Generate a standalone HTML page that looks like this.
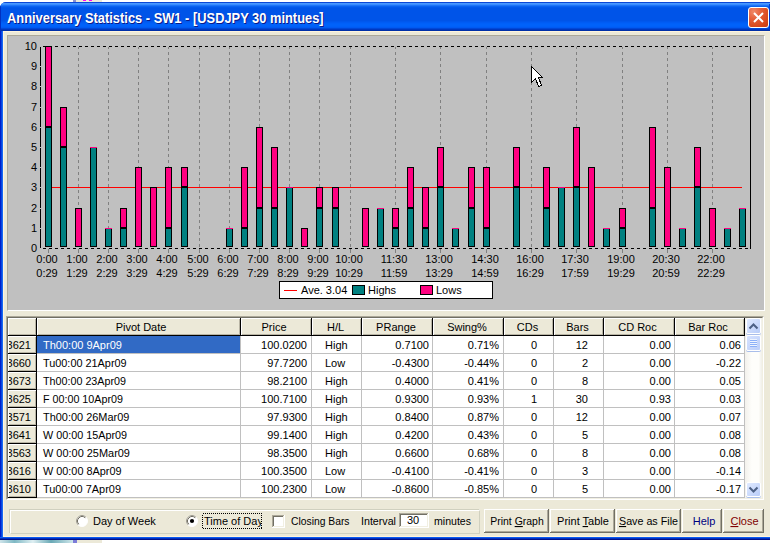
<!DOCTYPE html>
<html><head><meta charset="utf-8"><style>
*{margin:0;padding:0;box-sizing:border-box}
html,body{width:770px;height:543px;overflow:hidden;background:#fff;position:relative}
.a{position:absolute}
svg text{font-family:"Liberation Sans", sans-serif;font-size:11px;fill:#000}
</style></head><body>
<!-- desktop bits -->
<div class="a" style="left:73px;top:0;width:3px;height:2px;background:#8A8FD0"></div>
<div class="a" style="left:76px;top:0;width:26px;height:2px;background:#ECE9D8"></div>
<div class="a" style="left:83px;top:0;width:3px;height:1px;background:#F0F"></div>
<div class="a" style="left:89px;top:0;width:3px;height:1px;background:#F0F"></div>
<div class="a" style="left:0;top:540px;width:73px;height:3px;background:linear-gradient(90deg,#cfe4ea,#7fb8c4 20%,#dfeff2 45%,#6aa9b6 70%,#cfe6ea)"></div>
<div class="a" style="left:73px;top:540px;width:4px;height:3px;background:#7C7CD8"></div>
<div class="a" style="left:77px;top:540px;width:25px;height:3px;background:#ECE9D8"></div>
<!-- window frame -->
<div class="a" style="left:0;top:2px;width:776px;height:538px;border-radius:6px 7px 0 0;background:#0A4FE0"></div>
<div class="a" style="left:0;top:2px;width:776px;height:538px;border-radius:6px 7px 0 0;overflow:hidden">
 <div class="a" style="left:0;top:0;width:790px;height:29px;background:linear-gradient(180deg,#0A48D8 0px,#0A48D8 1px,#4898FF 1px,#4898FF 2px,#3A8CFF 2px,#3A8CFF 3px,#1C74F8 3px,#1C74F8 4px,#0A62F0 4px,#0A62F0 5px,#0258EC 5px,#0258EC 6px,#0054E8 6px,#0054E8 7px,#0054E8 7px,#0054E8 8px,#0054E8 8px,#0054E8 9px,#0054E8 9px,#0054E8 10px,#0054E8 10px,#0054E8 11px,#0054E8 11px,#0054E8 12px,#0054E8 12px,#0054E8 13px,#0054E8 13px,#0054E8 14px,#0054E8 14px,#0054E8 15px,#0054E8 15px,#0054E8 16px,#0054E8 16px,#0054E8 17px,#0054E8 17px,#0054E8 18px,#0054E8 18px,#0054E8 19px,#0058EE 19px,#0058EE 20px,#005CF4 20px,#005CF4 21px,#0060F8 21px,#0060F8 22px,#0062FA 22px,#0062FA 23px,#0062FA 23px,#0062FA 24px,#0060F8 24px,#0060F8 25px,#005AF2 25px,#005AF2 26px,#0048D8 26px,#0048D8 27px,#0038C0 27px,#0038C0 28px,#0030A8 28px,#0030A8 29px)"></div>
 <div class="a" style="left:0;top:4px;width:1px;height:26px;background:#0030C0"></div>
 <div class="a" style="left:0;top:29px;width:3px;height:509px;background:linear-gradient(90deg,#0020C8 0,#0020C8 1px,#0846E2 1px,#0846E2 2px,#1A6AF0 2px)"></div>
 <div class="a" style="left:0;top:535px;width:790px;height:3px;background:linear-gradient(180deg,#0A5AF0 0,#0A5AF0 1px,#0030C0 1px,#0030C0 2px,#00108A 2px)"></div>
</div>
<div class="a" style="left:3px;top:31px;width:787px;height:506px;background:#FFF4DC"></div>
<div class="a" style="left:4px;top:32px;width:786px;height:504px;background:#ECE9D8"></div>
<!-- title -->
<div class="a" style="left:7px;top:9.5px;font:bold 13px 'Liberation Sans',sans-serif;color:#fff;text-shadow:1px 1px #0A1A8A;white-space:nowrap;line-height:18px;transform:scale(0.99,1.12);transform-origin:0 14px">Anniversary Statistics - SW1 - [USDJPY 30 mintues]</div>
<!-- close button -->
<div class="a" style="left:769px;top:4px;width:1px;height:26px;background:linear-gradient(180deg,#0040D8,#0034C0)"></div>
<div class="a" style="left:748px;top:7px;width:21px;height:21px;border:1px solid #fff;border-radius:3px;background:radial-gradient(circle at 25% 20%,#F08A6A 0,#E5603A 35%,#DA4A1E 70%,#C43A10 100%)"></div>
<svg class="a" style="left:748px;top:7px" width="21" height="21"><path d="M6 6 L15 15 M15 6 L6 15" stroke="#fff" stroke-width="2"/></svg>
<!-- chart panel -->
<div class="a" style="left:7px;top:35px;width:758px;height:276px;background:#C0C0C0;border-top:1px solid #ACA899;border-left:1px solid #ACA899;border-right:1px solid #fff;border-bottom:1px solid #fff"></div>
<svg class="a" style="left:0;top:0" width="770" height="543" shape-rendering="crispEdges"><line x1="48.5" y1="47" x2="48.5" y2="248" stroke="#808080" stroke-width="1" stroke-dasharray="3 3" stroke-dashoffset="-5"/><rect x="48" y="249" width="1" height="4" fill="#808080"/><line x1="78.5" y1="47" x2="78.5" y2="248" stroke="#808080" stroke-width="1" stroke-dasharray="3 3" stroke-dashoffset="-5"/><rect x="78" y="249" width="1" height="4" fill="#808080"/><line x1="108.5" y1="47" x2="108.5" y2="248" stroke="#808080" stroke-width="1" stroke-dasharray="3 3" stroke-dashoffset="-5"/><rect x="108" y="249" width="1" height="4" fill="#808080"/><line x1="138.5" y1="47" x2="138.5" y2="248" stroke="#808080" stroke-width="1" stroke-dasharray="3 3" stroke-dashoffset="-5"/><rect x="138" y="249" width="1" height="4" fill="#808080"/><line x1="168.5" y1="47" x2="168.5" y2="248" stroke="#808080" stroke-width="1" stroke-dasharray="3 3" stroke-dashoffset="-5"/><rect x="168" y="249" width="1" height="4" fill="#808080"/><line x1="199.5" y1="47" x2="199.5" y2="248" stroke="#808080" stroke-width="1" stroke-dasharray="3 3" stroke-dashoffset="-5"/><rect x="199" y="249" width="1" height="4" fill="#808080"/><line x1="229.5" y1="47" x2="229.5" y2="248" stroke="#808080" stroke-width="1" stroke-dasharray="3 3" stroke-dashoffset="-5"/><rect x="229" y="249" width="1" height="4" fill="#808080"/><line x1="259.5" y1="47" x2="259.5" y2="248" stroke="#808080" stroke-width="1" stroke-dasharray="3 3" stroke-dashoffset="-5"/><rect x="259" y="249" width="1" height="4" fill="#808080"/><line x1="289.5" y1="47" x2="289.5" y2="248" stroke="#808080" stroke-width="1" stroke-dasharray="3 3" stroke-dashoffset="-5"/><rect x="289" y="249" width="1" height="4" fill="#808080"/><line x1="319.5" y1="47" x2="319.5" y2="248" stroke="#808080" stroke-width="1" stroke-dasharray="3 3" stroke-dashoffset="-5"/><rect x="319" y="249" width="1" height="4" fill="#808080"/><line x1="350.5" y1="47" x2="350.5" y2="248" stroke="#808080" stroke-width="1" stroke-dasharray="3 3" stroke-dashoffset="-5"/><rect x="350" y="249" width="1" height="4" fill="#808080"/><line x1="395.5" y1="47" x2="395.5" y2="248" stroke="#808080" stroke-width="1" stroke-dasharray="3 3" stroke-dashoffset="-5"/><rect x="395" y="249" width="1" height="4" fill="#808080"/><line x1="440.5" y1="47" x2="440.5" y2="248" stroke="#808080" stroke-width="1" stroke-dasharray="3 3" stroke-dashoffset="-5"/><rect x="440" y="249" width="1" height="4" fill="#808080"/><line x1="486.5" y1="47" x2="486.5" y2="248" stroke="#808080" stroke-width="1" stroke-dasharray="3 3" stroke-dashoffset="-5"/><rect x="486" y="249" width="1" height="4" fill="#808080"/><line x1="531.5" y1="47" x2="531.5" y2="248" stroke="#808080" stroke-width="1" stroke-dasharray="3 3" stroke-dashoffset="-5"/><rect x="531" y="249" width="1" height="4" fill="#808080"/><line x1="576.5" y1="47" x2="576.5" y2="248" stroke="#808080" stroke-width="1" stroke-dasharray="3 3" stroke-dashoffset="-5"/><rect x="576" y="249" width="1" height="4" fill="#808080"/><line x1="622.5" y1="47" x2="622.5" y2="248" stroke="#808080" stroke-width="1" stroke-dasharray="3 3" stroke-dashoffset="-5"/><rect x="622" y="249" width="1" height="4" fill="#808080"/><line x1="667.5" y1="47" x2="667.5" y2="248" stroke="#808080" stroke-width="1" stroke-dasharray="3 3" stroke-dashoffset="-5"/><rect x="667" y="249" width="1" height="4" fill="#808080"/><line x1="712.5" y1="47" x2="712.5" y2="248" stroke="#808080" stroke-width="1" stroke-dasharray="3 3" stroke-dashoffset="-5"/><rect x="712" y="249" width="1" height="4" fill="#808080"/><line x1="43" y1="46.5" x2="750" y2="46.5" stroke="#000" stroke-width="1" stroke-dasharray="3 3"/><line x1="43" y1="248.5" x2="750" y2="248.5" stroke="#000" stroke-width="1" stroke-dasharray="3 3"/><rect x="40" y="47" width="1" height="19" fill="#000"/><rect x="40" y="67" width="1" height="19" fill="#000"/><rect x="40" y="87" width="1" height="20" fill="#000"/><rect x="40" y="108" width="1" height="19" fill="#000"/><rect x="40" y="128" width="1" height="19" fill="#000"/><rect x="40" y="148" width="1" height="19" fill="#000"/><rect x="40" y="168" width="1" height="19" fill="#000"/><rect x="40" y="188" width="1" height="20" fill="#000"/><rect x="40" y="209" width="1" height="19" fill="#000"/><rect x="40" y="229" width="1" height="19" fill="#000"/><rect x="750" y="46" width="1" height="203" fill="#000"/><rect x="48" y="187" width="694" height="1" fill="#FF0000"/><rect x="45" y="46" width="7" height="81" fill="#000"/><rect x="46" y="47" width="5" height="79" fill="#FF0080"/><rect x="45" y="127" width="7" height="120" fill="#000"/><rect x="46" y="128" width="5" height="118" fill="#008080"/><rect x="60" y="107" width="7" height="40" fill="#000"/><rect x="61" y="108" width="5" height="38" fill="#FF0080"/><rect x="60" y="147" width="7" height="100" fill="#000"/><rect x="61" y="148" width="5" height="98" fill="#008080"/><rect x="75" y="208" width="7" height="39" fill="#000"/><rect x="76" y="209" width="5" height="37" fill="#FF0080"/><rect x="90" y="147" width="7" height="100" fill="#000"/><rect x="91" y="148" width="5" height="98" fill="#008080"/><rect x="90" y="147" width="7" height="1" fill="#FF0080"/><rect x="105" y="228" width="7" height="19" fill="#000"/><rect x="106" y="229" width="5" height="17" fill="#008080"/><rect x="105" y="228" width="7" height="1" fill="#FF0080"/><rect x="120" y="208" width="7" height="20" fill="#000"/><rect x="121" y="209" width="5" height="18" fill="#FF0080"/><rect x="120" y="228" width="7" height="19" fill="#000"/><rect x="121" y="229" width="5" height="17" fill="#008080"/><rect x="135" y="167" width="7" height="80" fill="#000"/><rect x="136" y="168" width="5" height="78" fill="#FF0080"/><rect x="150" y="187" width="7" height="60" fill="#000"/><rect x="151" y="188" width="5" height="58" fill="#FF0080"/><rect x="165" y="167" width="7" height="61" fill="#000"/><rect x="166" y="168" width="5" height="59" fill="#FF0080"/><rect x="165" y="228" width="7" height="19" fill="#000"/><rect x="166" y="229" width="5" height="17" fill="#008080"/><rect x="181" y="167" width="7" height="20" fill="#000"/><rect x="182" y="168" width="5" height="18" fill="#FF0080"/><rect x="181" y="187" width="7" height="60" fill="#000"/><rect x="182" y="188" width="5" height="58" fill="#008080"/><rect x="226" y="228" width="7" height="19" fill="#000"/><rect x="227" y="229" width="5" height="17" fill="#008080"/><rect x="226" y="228" width="7" height="1" fill="#FF0080"/><rect x="241" y="167" width="7" height="61" fill="#000"/><rect x="242" y="168" width="5" height="59" fill="#FF0080"/><rect x="241" y="228" width="7" height="19" fill="#000"/><rect x="242" y="229" width="5" height="17" fill="#008080"/><rect x="256" y="127" width="7" height="81" fill="#000"/><rect x="257" y="128" width="5" height="79" fill="#FF0080"/><rect x="256" y="208" width="7" height="39" fill="#000"/><rect x="257" y="209" width="5" height="37" fill="#008080"/><rect x="271" y="147" width="7" height="61" fill="#000"/><rect x="272" y="148" width="5" height="59" fill="#FF0080"/><rect x="271" y="208" width="7" height="39" fill="#000"/><rect x="272" y="209" width="5" height="37" fill="#008080"/><rect x="286" y="187" width="7" height="60" fill="#000"/><rect x="287" y="188" width="5" height="58" fill="#008080"/><rect x="286" y="187" width="7" height="1" fill="#FF0080"/><rect x="301" y="228" width="7" height="19" fill="#000"/><rect x="302" y="229" width="5" height="17" fill="#FF0080"/><rect x="316" y="187" width="7" height="21" fill="#000"/><rect x="317" y="188" width="5" height="19" fill="#FF0080"/><rect x="316" y="208" width="7" height="39" fill="#000"/><rect x="317" y="209" width="5" height="37" fill="#008080"/><rect x="332" y="187" width="7" height="21" fill="#000"/><rect x="333" y="188" width="5" height="19" fill="#FF0080"/><rect x="332" y="208" width="7" height="39" fill="#000"/><rect x="333" y="209" width="5" height="37" fill="#008080"/><rect x="362" y="208" width="7" height="39" fill="#000"/><rect x="363" y="209" width="5" height="37" fill="#FF0080"/><rect x="377" y="208" width="7" height="39" fill="#000"/><rect x="378" y="209" width="5" height="37" fill="#008080"/><rect x="377" y="208" width="7" height="1" fill="#FF0080"/><rect x="392" y="208" width="7" height="20" fill="#000"/><rect x="393" y="209" width="5" height="18" fill="#FF0080"/><rect x="392" y="228" width="7" height="19" fill="#000"/><rect x="393" y="229" width="5" height="17" fill="#008080"/><rect x="407" y="167" width="7" height="41" fill="#000"/><rect x="408" y="168" width="5" height="39" fill="#FF0080"/><rect x="407" y="208" width="7" height="39" fill="#000"/><rect x="408" y="209" width="5" height="37" fill="#008080"/><rect x="422" y="187" width="7" height="41" fill="#000"/><rect x="423" y="188" width="5" height="39" fill="#FF0080"/><rect x="422" y="228" width="7" height="19" fill="#000"/><rect x="423" y="229" width="5" height="17" fill="#008080"/><rect x="437" y="147" width="7" height="40" fill="#000"/><rect x="438" y="148" width="5" height="38" fill="#FF0080"/><rect x="437" y="187" width="7" height="60" fill="#000"/><rect x="438" y="188" width="5" height="58" fill="#008080"/><rect x="452" y="228" width="7" height="19" fill="#000"/><rect x="453" y="229" width="5" height="17" fill="#008080"/><rect x="452" y="228" width="7" height="1" fill="#FF0080"/><rect x="468" y="167" width="7" height="41" fill="#000"/><rect x="469" y="168" width="5" height="39" fill="#FF0080"/><rect x="468" y="208" width="7" height="39" fill="#000"/><rect x="469" y="209" width="5" height="37" fill="#008080"/><rect x="483" y="167" width="7" height="61" fill="#000"/><rect x="484" y="168" width="5" height="59" fill="#FF0080"/><rect x="483" y="228" width="7" height="19" fill="#000"/><rect x="484" y="229" width="5" height="17" fill="#008080"/><rect x="513" y="147" width="7" height="40" fill="#000"/><rect x="514" y="148" width="5" height="38" fill="#FF0080"/><rect x="513" y="187" width="7" height="60" fill="#000"/><rect x="514" y="188" width="5" height="58" fill="#008080"/><rect x="543" y="167" width="7" height="41" fill="#000"/><rect x="544" y="168" width="5" height="39" fill="#FF0080"/><rect x="543" y="208" width="7" height="39" fill="#000"/><rect x="544" y="209" width="5" height="37" fill="#008080"/><rect x="558" y="187" width="7" height="60" fill="#000"/><rect x="559" y="188" width="5" height="58" fill="#008080"/><rect x="558" y="187" width="7" height="1" fill="#FF0080"/><rect x="573" y="127" width="7" height="60" fill="#000"/><rect x="574" y="128" width="5" height="58" fill="#FF0080"/><rect x="573" y="187" width="7" height="60" fill="#000"/><rect x="574" y="188" width="5" height="58" fill="#008080"/><rect x="588" y="167" width="7" height="80" fill="#000"/><rect x="589" y="168" width="5" height="78" fill="#FF0080"/><rect x="603" y="228" width="7" height="19" fill="#000"/><rect x="604" y="229" width="5" height="17" fill="#008080"/><rect x="603" y="228" width="7" height="1" fill="#FF0080"/><rect x="619" y="208" width="7" height="20" fill="#000"/><rect x="620" y="209" width="5" height="18" fill="#FF0080"/><rect x="619" y="228" width="7" height="19" fill="#000"/><rect x="620" y="229" width="5" height="17" fill="#008080"/><rect x="649" y="127" width="7" height="81" fill="#000"/><rect x="650" y="128" width="5" height="79" fill="#FF0080"/><rect x="649" y="208" width="7" height="39" fill="#000"/><rect x="650" y="209" width="5" height="37" fill="#008080"/><rect x="664" y="167" width="7" height="80" fill="#000"/><rect x="665" y="168" width="5" height="78" fill="#FF0080"/><rect x="679" y="228" width="7" height="19" fill="#000"/><rect x="680" y="229" width="5" height="17" fill="#008080"/><rect x="679" y="228" width="7" height="1" fill="#FF0080"/><rect x="694" y="147" width="7" height="40" fill="#000"/><rect x="695" y="148" width="5" height="38" fill="#FF0080"/><rect x="694" y="187" width="7" height="60" fill="#000"/><rect x="695" y="188" width="5" height="58" fill="#008080"/><rect x="709" y="208" width="7" height="39" fill="#000"/><rect x="710" y="209" width="5" height="37" fill="#FF0080"/><rect x="724" y="228" width="7" height="19" fill="#000"/><rect x="725" y="229" width="5" height="17" fill="#008080"/><rect x="724" y="228" width="7" height="1" fill="#FF0080"/><rect x="739" y="208" width="7" height="39" fill="#000"/><rect x="740" y="209" width="5" height="37" fill="#008080"/><rect x="739" y="208" width="7" height="1" fill="#FF0080"/><text x="37" y="252" text-anchor="end">0</text><text x="37" y="232" text-anchor="end">1</text><text x="37" y="212" text-anchor="end">2</text><text x="37" y="191" text-anchor="end">3</text><text x="37" y="171" text-anchor="end">4</text><text x="37" y="151" text-anchor="end">5</text><text x="37" y="131" text-anchor="end">6</text><text x="37" y="111" text-anchor="end">7</text><text x="37" y="90" text-anchor="end">8</text><text x="37" y="70" text-anchor="end">9</text><text x="37" y="50" text-anchor="end">10</text><text x="47.0" y="263" text-anchor="middle">0:00</text><text x="47.0" y="277" text-anchor="middle">0:29</text><text x="77.0" y="263" text-anchor="middle">1:00</text><text x="77.0" y="277" text-anchor="middle">1:29</text><text x="107.0" y="263" text-anchor="middle">2:00</text><text x="107.0" y="277" text-anchor="middle">2:29</text><text x="137.0" y="263" text-anchor="middle">3:00</text><text x="137.0" y="277" text-anchor="middle">3:29</text><text x="167.0" y="263" text-anchor="middle">4:00</text><text x="167.0" y="277" text-anchor="middle">4:29</text><text x="198.0" y="263" text-anchor="middle">5:00</text><text x="198.0" y="277" text-anchor="middle">5:29</text><text x="228.0" y="263" text-anchor="middle">6:00</text><text x="228.0" y="277" text-anchor="middle">6:29</text><text x="258.0" y="263" text-anchor="middle">7:00</text><text x="258.0" y="277" text-anchor="middle">7:29</text><text x="288.0" y="263" text-anchor="middle">8:00</text><text x="288.0" y="277" text-anchor="middle">8:29</text><text x="318.0" y="263" text-anchor="middle">9:00</text><text x="318.0" y="277" text-anchor="middle">9:29</text><text x="349.0" y="263" text-anchor="middle">10:00</text><text x="349.0" y="277" text-anchor="middle">10:29</text><text x="394.0" y="263" text-anchor="middle">11:30</text><text x="394.0" y="277" text-anchor="middle">11:59</text><text x="439.0" y="263" text-anchor="middle">13:00</text><text x="439.0" y="277" text-anchor="middle">13:29</text><text x="485.0" y="263" text-anchor="middle">14:30</text><text x="485.0" y="277" text-anchor="middle">14:59</text><text x="530.0" y="263" text-anchor="middle">16:00</text><text x="530.0" y="277" text-anchor="middle">16:29</text><text x="575.0" y="263" text-anchor="middle">17:30</text><text x="575.0" y="277" text-anchor="middle">17:59</text><text x="621.0" y="263" text-anchor="middle">19:00</text><text x="621.0" y="277" text-anchor="middle">19:29</text><text x="666.0" y="263" text-anchor="middle">20:30</text><text x="666.0" y="277" text-anchor="middle">20:59</text><text x="711.0" y="263" text-anchor="middle">22:00</text><text x="711.0" y="277" text-anchor="middle">22:29</text><rect x="279" y="281" width="214" height="18" fill="#000"/><rect x="280" y="282" width="212" height="16" fill="#fff"/><rect x="284" y="290" width="13" height="1" fill="#FF0000"/><text x="301" y="294">Ave. 3.04</text><rect x="352" y="285" width="13" height="10" fill="#000"/><rect x="353" y="286" width="11" height="8" fill="#008080"/><text x="368" y="294">Highs</text><rect x="420" y="285" width="13" height="10" fill="#000"/><rect x="421" y="286" width="11" height="8" fill="#FF0080"/><text x="436" y="294">Lows</text><path d="M531.5 66.5 L531.5 82.5 L535.5 78.5 L538.5 86.5 L541.5 85.5 L538.5 77.5 L542.5 77.5 Z" fill="#fff" stroke="#000" stroke-width="1"/></svg>
<!-- table -->
<div class="a" style="left:6px;top:316px;width:758px;height:184px;border-top:1px solid #ACA899;border-left:1px solid #ACA899;border-right:1px solid #fff;border-bottom:1px solid #fff"></div>
<div class="a" style="left:7px;top:317px;width:756px;height:182px;border-top:1px solid #716F64;border-left:1px solid #716F64;border-right:1px solid #F1EFE2;border-bottom:1px solid #F1EFE2"></div>
<svg class="a" style="left:0;top:0" width="770" height="543" shape-rendering="crispEdges"><defs><clipPath id="rh"><rect x="9" y="318" width="27" height="180"/></clipPath></defs><rect x="8" y="318" width="737" height="180" fill="#fff"/><rect x="8" y="318" width="29" height="18" fill="#000"/><rect x="8" y="318" width="28" height="17" fill="#fff"/><rect x="9" y="319" width="27" height="16" fill="#B8B4A4"/><rect x="9" y="319" width="26" height="15" fill="#ECE9D8"/><rect x="37" y="318" width="204" height="18" fill="#000"/><rect x="37" y="318" width="203" height="17" fill="#fff"/><rect x="38" y="319" width="202" height="16" fill="#B8B4A4"/><rect x="38" y="319" width="201" height="15" fill="#ECE9D8"/><text x="141.0" y="331" text-anchor="middle">Pivot Date</text><rect x="241" y="318" width="71" height="18" fill="#000"/><rect x="241" y="318" width="70" height="17" fill="#fff"/><rect x="242" y="319" width="69" height="16" fill="#B8B4A4"/><rect x="242" y="319" width="68" height="15" fill="#ECE9D8"/><text x="274.0" y="331" text-anchor="middle">Price</text><rect x="312" y="318" width="50" height="18" fill="#000"/><rect x="312" y="318" width="49" height="17" fill="#fff"/><rect x="313" y="319" width="48" height="16" fill="#B8B4A4"/><rect x="313" y="319" width="47" height="15" fill="#ECE9D8"/><text x="335.5" y="331" text-anchor="middle">H/L</text><rect x="362" y="318" width="71" height="18" fill="#000"/><rect x="362" y="318" width="70" height="17" fill="#fff"/><rect x="363" y="319" width="69" height="16" fill="#B8B4A4"/><rect x="363" y="319" width="68" height="15" fill="#ECE9D8"/><text x="396.0" y="331" text-anchor="middle">PRange</text><rect x="433" y="318" width="71" height="18" fill="#000"/><rect x="433" y="318" width="70" height="17" fill="#fff"/><rect x="434" y="319" width="69" height="16" fill="#B8B4A4"/><rect x="434" y="319" width="68" height="15" fill="#ECE9D8"/><text x="467.0" y="331" text-anchor="middle">Swing%</text><rect x="504" y="318" width="50" height="18" fill="#000"/><rect x="504" y="318" width="49" height="17" fill="#fff"/><rect x="505" y="319" width="48" height="16" fill="#B8B4A4"/><rect x="505" y="319" width="47" height="15" fill="#ECE9D8"/><text x="527.5" y="331" text-anchor="middle">CDs</text><rect x="554" y="318" width="50" height="18" fill="#000"/><rect x="554" y="318" width="49" height="17" fill="#fff"/><rect x="555" y="319" width="48" height="16" fill="#B8B4A4"/><rect x="555" y="319" width="47" height="15" fill="#ECE9D8"/><text x="577.5" y="331" text-anchor="middle">Bars</text><rect x="604" y="318" width="71" height="18" fill="#000"/><rect x="604" y="318" width="70" height="17" fill="#fff"/><rect x="605" y="319" width="69" height="16" fill="#B8B4A4"/><rect x="605" y="319" width="68" height="15" fill="#ECE9D8"/><text x="637.5" y="331" text-anchor="middle">CD Roc</text><rect x="675" y="318" width="70" height="18" fill="#000"/><rect x="675" y="318" width="69" height="17" fill="#fff"/><rect x="676" y="319" width="68" height="16" fill="#B8B4A4"/><rect x="676" y="319" width="67" height="15" fill="#ECE9D8"/><text x="708.0" y="331" text-anchor="middle">Bar Roc</text><rect x="8" y="336" width="29" height="18" fill="#000"/><rect x="8" y="336" width="28" height="17" fill="#fff"/><rect x="9" y="337" width="27" height="16" fill="#B8B4A4"/><rect x="9" y="337" width="26" height="15" fill="#ECE9D8"/><rect x="37" y="353" width="708" height="1" fill="#C0C0C0"/><rect x="240" y="336" width="1" height="18" fill="#C0C0C0"/><rect x="311" y="336" width="1" height="18" fill="#C0C0C0"/><rect x="361" y="336" width="1" height="18" fill="#C0C0C0"/><rect x="432" y="336" width="1" height="18" fill="#C0C0C0"/><rect x="503" y="336" width="1" height="18" fill="#C0C0C0"/><rect x="553" y="336" width="1" height="18" fill="#C0C0C0"/><rect x="603" y="336" width="1" height="18" fill="#C0C0C0"/><rect x="674" y="336" width="1" height="18" fill="#C0C0C0"/><rect x="744" y="336" width="1" height="18" fill="#C0C0C0"/><rect x="37" y="336" width="203" height="17" fill="#316AC5"/><text x="31" y="349" text-anchor="end" clip-path="url(#rh)">3621</text><text x="43" y="349" style="fill:#fff" textLength="78.89" lengthAdjust="spacingAndGlyphs">Th00:00 9Apr09</text><text x="307" y="349" text-anchor="end">100.0200</text><text x="325" y="349">High</text><text x="429" y="349" text-anchor="end">0.7100</text><text x="499" y="349" text-anchor="end">0.71%</text><text x="537" y="349" text-anchor="end">0</text><text x="588" y="349" text-anchor="end">12</text><text x="671" y="349" text-anchor="end">0.00</text><text x="741" y="349" text-anchor="end">0.06</text><rect x="8" y="354" width="29" height="18" fill="#000"/><rect x="8" y="354" width="28" height="17" fill="#fff"/><rect x="9" y="355" width="27" height="16" fill="#B8B4A4"/><rect x="9" y="355" width="26" height="15" fill="#ECE9D8"/><rect x="37" y="371" width="708" height="1" fill="#C0C0C0"/><rect x="240" y="354" width="1" height="18" fill="#C0C0C0"/><rect x="311" y="354" width="1" height="18" fill="#C0C0C0"/><rect x="361" y="354" width="1" height="18" fill="#C0C0C0"/><rect x="432" y="354" width="1" height="18" fill="#C0C0C0"/><rect x="503" y="354" width="1" height="18" fill="#C0C0C0"/><rect x="553" y="354" width="1" height="18" fill="#C0C0C0"/><rect x="603" y="354" width="1" height="18" fill="#C0C0C0"/><rect x="674" y="354" width="1" height="18" fill="#C0C0C0"/><rect x="744" y="354" width="1" height="18" fill="#C0C0C0"/><text x="31" y="367" text-anchor="end" clip-path="url(#rh)">3660</text><text x="43" y="367" style="fill:#000" textLength="83.60" lengthAdjust="spacingAndGlyphs">Tu00:00 21Apr09</text><text x="307" y="367" text-anchor="end">97.7200</text><text x="325" y="367">Low</text><text x="429" y="367" text-anchor="end">-0.4300</text><text x="499" y="367" text-anchor="end">-0.44%</text><text x="537" y="367" text-anchor="end">0</text><text x="588" y="367" text-anchor="end">2</text><text x="671" y="367" text-anchor="end">0.00</text><text x="741" y="367" text-anchor="end">-0.22</text><rect x="8" y="372" width="29" height="18" fill="#000"/><rect x="8" y="372" width="28" height="17" fill="#fff"/><rect x="9" y="373" width="27" height="16" fill="#B8B4A4"/><rect x="9" y="373" width="26" height="15" fill="#ECE9D8"/><rect x="37" y="389" width="708" height="1" fill="#C0C0C0"/><rect x="240" y="372" width="1" height="18" fill="#C0C0C0"/><rect x="311" y="372" width="1" height="18" fill="#C0C0C0"/><rect x="361" y="372" width="1" height="18" fill="#C0C0C0"/><rect x="432" y="372" width="1" height="18" fill="#C0C0C0"/><rect x="503" y="372" width="1" height="18" fill="#C0C0C0"/><rect x="553" y="372" width="1" height="18" fill="#C0C0C0"/><rect x="603" y="372" width="1" height="18" fill="#C0C0C0"/><rect x="674" y="372" width="1" height="18" fill="#C0C0C0"/><rect x="744" y="372" width="1" height="18" fill="#C0C0C0"/><text x="31" y="385" text-anchor="end" clip-path="url(#rh)">3673</text><text x="43" y="385" style="fill:#000" textLength="83.01" lengthAdjust="spacingAndGlyphs">Th00:00 23Apr09</text><text x="307" y="385" text-anchor="end">98.2100</text><text x="325" y="385">High</text><text x="429" y="385" text-anchor="end">0.4000</text><text x="499" y="385" text-anchor="end">0.41%</text><text x="537" y="385" text-anchor="end">0</text><text x="588" y="385" text-anchor="end">8</text><text x="671" y="385" text-anchor="end">0.00</text><text x="741" y="385" text-anchor="end">0.05</text><rect x="8" y="390" width="29" height="18" fill="#000"/><rect x="8" y="390" width="28" height="17" fill="#fff"/><rect x="9" y="391" width="27" height="16" fill="#B8B4A4"/><rect x="9" y="391" width="26" height="15" fill="#ECE9D8"/><rect x="37" y="407" width="708" height="1" fill="#C0C0C0"/><rect x="240" y="390" width="1" height="18" fill="#C0C0C0"/><rect x="311" y="390" width="1" height="18" fill="#C0C0C0"/><rect x="361" y="390" width="1" height="18" fill="#C0C0C0"/><rect x="432" y="390" width="1" height="18" fill="#C0C0C0"/><rect x="503" y="390" width="1" height="18" fill="#C0C0C0"/><rect x="553" y="390" width="1" height="18" fill="#C0C0C0"/><rect x="603" y="390" width="1" height="18" fill="#C0C0C0"/><rect x="674" y="390" width="1" height="18" fill="#C0C0C0"/><rect x="744" y="390" width="1" height="18" fill="#C0C0C0"/><text x="31" y="403" text-anchor="end" clip-path="url(#rh)">3625</text><text x="43" y="403" style="fill:#000" textLength="79.95" lengthAdjust="spacingAndGlyphs">F 00:00 10Apr09</text><text x="307" y="403" text-anchor="end">100.7100</text><text x="325" y="403">High</text><text x="429" y="403" text-anchor="end">0.9300</text><text x="499" y="403" text-anchor="end">0.93%</text><text x="537" y="403" text-anchor="end">1</text><text x="588" y="403" text-anchor="end">30</text><text x="671" y="403" text-anchor="end">0.93</text><text x="741" y="403" text-anchor="end">0.03</text><rect x="8" y="408" width="29" height="18" fill="#000"/><rect x="8" y="408" width="28" height="17" fill="#fff"/><rect x="9" y="409" width="27" height="16" fill="#B8B4A4"/><rect x="9" y="409" width="26" height="15" fill="#ECE9D8"/><rect x="37" y="425" width="708" height="1" fill="#C0C0C0"/><rect x="240" y="408" width="1" height="18" fill="#C0C0C0"/><rect x="311" y="408" width="1" height="18" fill="#C0C0C0"/><rect x="361" y="408" width="1" height="18" fill="#C0C0C0"/><rect x="432" y="408" width="1" height="18" fill="#C0C0C0"/><rect x="503" y="408" width="1" height="18" fill="#C0C0C0"/><rect x="553" y="408" width="1" height="18" fill="#C0C0C0"/><rect x="603" y="408" width="1" height="18" fill="#C0C0C0"/><rect x="674" y="408" width="1" height="18" fill="#C0C0C0"/><rect x="744" y="408" width="1" height="18" fill="#C0C0C0"/><text x="31" y="421" text-anchor="end" clip-path="url(#rh)">3571</text><text x="43" y="421" style="fill:#000" textLength="86.33" lengthAdjust="spacingAndGlyphs">Th00:00 26Mar09</text><text x="307" y="421" text-anchor="end">97.9300</text><text x="325" y="421">High</text><text x="429" y="421" text-anchor="end">0.8400</text><text x="499" y="421" text-anchor="end">0.87%</text><text x="537" y="421" text-anchor="end">0</text><text x="588" y="421" text-anchor="end">12</text><text x="671" y="421" text-anchor="end">0.00</text><text x="741" y="421" text-anchor="end">0.07</text><rect x="8" y="426" width="29" height="18" fill="#000"/><rect x="8" y="426" width="28" height="17" fill="#fff"/><rect x="9" y="427" width="27" height="16" fill="#B8B4A4"/><rect x="9" y="427" width="26" height="15" fill="#ECE9D8"/><rect x="37" y="443" width="708" height="1" fill="#C0C0C0"/><rect x="240" y="426" width="1" height="18" fill="#C0C0C0"/><rect x="311" y="426" width="1" height="18" fill="#C0C0C0"/><rect x="361" y="426" width="1" height="18" fill="#C0C0C0"/><rect x="432" y="426" width="1" height="18" fill="#C0C0C0"/><rect x="503" y="426" width="1" height="18" fill="#C0C0C0"/><rect x="553" y="426" width="1" height="18" fill="#C0C0C0"/><rect x="603" y="426" width="1" height="18" fill="#C0C0C0"/><rect x="674" y="426" width="1" height="18" fill="#C0C0C0"/><rect x="744" y="426" width="1" height="18" fill="#C0C0C0"/><text x="31" y="439" text-anchor="end" clip-path="url(#rh)">3641</text><text x="43" y="439" style="fill:#000" textLength="84.11" lengthAdjust="spacingAndGlyphs">W 00:00 15Apr09</text><text x="307" y="439" text-anchor="end">99.1400</text><text x="325" y="439">High</text><text x="429" y="439" text-anchor="end">0.4200</text><text x="499" y="439" text-anchor="end">0.43%</text><text x="537" y="439" text-anchor="end">0</text><text x="588" y="439" text-anchor="end">5</text><text x="671" y="439" text-anchor="end">0.00</text><text x="741" y="439" text-anchor="end">0.08</text><rect x="8" y="444" width="29" height="18" fill="#000"/><rect x="8" y="444" width="28" height="17" fill="#fff"/><rect x="9" y="445" width="27" height="16" fill="#B8B4A4"/><rect x="9" y="445" width="26" height="15" fill="#ECE9D8"/><rect x="37" y="461" width="708" height="1" fill="#C0C0C0"/><rect x="240" y="444" width="1" height="18" fill="#C0C0C0"/><rect x="311" y="444" width="1" height="18" fill="#C0C0C0"/><rect x="361" y="444" width="1" height="18" fill="#C0C0C0"/><rect x="432" y="444" width="1" height="18" fill="#C0C0C0"/><rect x="503" y="444" width="1" height="18" fill="#C0C0C0"/><rect x="553" y="444" width="1" height="18" fill="#C0C0C0"/><rect x="603" y="444" width="1" height="18" fill="#C0C0C0"/><rect x="674" y="444" width="1" height="18" fill="#C0C0C0"/><rect x="744" y="444" width="1" height="18" fill="#C0C0C0"/><text x="31" y="457" text-anchor="end" clip-path="url(#rh)">3563</text><text x="43" y="457" style="fill:#000" textLength="86.94" lengthAdjust="spacingAndGlyphs">W 00:00 25Mar09</text><text x="307" y="457" text-anchor="end">98.3500</text><text x="325" y="457">High</text><text x="429" y="457" text-anchor="end">0.6600</text><text x="499" y="457" text-anchor="end">0.68%</text><text x="537" y="457" text-anchor="end">0</text><text x="588" y="457" text-anchor="end">8</text><text x="671" y="457" text-anchor="end">0.00</text><text x="741" y="457" text-anchor="end">0.08</text><rect x="8" y="462" width="29" height="18" fill="#000"/><rect x="8" y="462" width="28" height="17" fill="#fff"/><rect x="9" y="463" width="27" height="16" fill="#B8B4A4"/><rect x="9" y="463" width="26" height="15" fill="#ECE9D8"/><rect x="37" y="479" width="708" height="1" fill="#C0C0C0"/><rect x="240" y="462" width="1" height="18" fill="#C0C0C0"/><rect x="311" y="462" width="1" height="18" fill="#C0C0C0"/><rect x="361" y="462" width="1" height="18" fill="#C0C0C0"/><rect x="432" y="462" width="1" height="18" fill="#C0C0C0"/><rect x="503" y="462" width="1" height="18" fill="#C0C0C0"/><rect x="553" y="462" width="1" height="18" fill="#C0C0C0"/><rect x="603" y="462" width="1" height="18" fill="#C0C0C0"/><rect x="674" y="462" width="1" height="18" fill="#C0C0C0"/><rect x="744" y="462" width="1" height="18" fill="#C0C0C0"/><text x="31" y="475" text-anchor="end" clip-path="url(#rh)">3616</text><text x="43" y="475" style="fill:#000" textLength="78.49" lengthAdjust="spacingAndGlyphs">W 00:00 8Apr09</text><text x="307" y="475" text-anchor="end">100.3500</text><text x="325" y="475">Low</text><text x="429" y="475" text-anchor="end">-0.4100</text><text x="499" y="475" text-anchor="end">-0.41%</text><text x="537" y="475" text-anchor="end">0</text><text x="588" y="475" text-anchor="end">3</text><text x="671" y="475" text-anchor="end">0.00</text><text x="741" y="475" text-anchor="end">-0.14</text><rect x="8" y="480" width="29" height="18" fill="#000"/><rect x="8" y="480" width="28" height="17" fill="#fff"/><rect x="9" y="481" width="27" height="16" fill="#B8B4A4"/><rect x="9" y="481" width="26" height="15" fill="#ECE9D8"/><rect x="37" y="497" width="708" height="1" fill="#C0C0C0"/><rect x="240" y="480" width="1" height="18" fill="#C0C0C0"/><rect x="311" y="480" width="1" height="18" fill="#C0C0C0"/><rect x="361" y="480" width="1" height="18" fill="#C0C0C0"/><rect x="432" y="480" width="1" height="18" fill="#C0C0C0"/><rect x="503" y="480" width="1" height="18" fill="#C0C0C0"/><rect x="553" y="480" width="1" height="18" fill="#C0C0C0"/><rect x="603" y="480" width="1" height="18" fill="#C0C0C0"/><rect x="674" y="480" width="1" height="18" fill="#C0C0C0"/><rect x="744" y="480" width="1" height="18" fill="#C0C0C0"/><text x="31" y="493" text-anchor="end" clip-path="url(#rh)">3610</text><text x="43" y="493" style="fill:#000" textLength="77.98" lengthAdjust="spacingAndGlyphs">Tu00:00 7Apr09</text><text x="307" y="493" text-anchor="end">100.2300</text><text x="325" y="493">Low</text><text x="429" y="493" text-anchor="end">-0.8600</text><text x="499" y="493" text-anchor="end">-0.85%</text><text x="537" y="493" text-anchor="end">0</text><text x="588" y="493" text-anchor="end">5</text><text x="671" y="493" text-anchor="end">0.00</text><text x="741" y="493" text-anchor="end">-0.17</text></svg>
<!-- scrollbar -->
<div class="a" style="left:745px;top:318px;width:17px;height:180px;background:linear-gradient(90deg,#F3F1EC,#FEFEFB 40%,#FEFEFB 80%,#F0EFE8)"></div>
<div class="a" style="left:746px;top:318px;width:15px;height:16px;border-radius:2px;border:1px solid #fff;background:linear-gradient(135deg,#E0EAFF,#B8CCF8);box-shadow:0 1px 0 #A9BEEA"></div>
<svg class="a" style="left:745px;top:318px" width="17" height="17"><path d="M4.5 10.5 L8.5 6.5 L12.5 10.5" fill="none" stroke="#4D6185" stroke-width="2"/></svg>
<div class="a" style="left:746px;top:335px;width:15px;height:16px;border-radius:2px;border:1px solid #fff;background:linear-gradient(135deg,#D6E2FF,#BCCFF9);box-shadow:0 1px 0 #A9BEEA"></div>
<svg class="a" style="left:745px;top:335px" width="17" height="16" shape-rendering="crispEdges"><rect x="5" y="4" width="7" height="1" fill="#EEF4FE"/><rect x="5" y="5" width="7" height="1" fill="#8CB0F8"/><rect x="5" y="6" width="7" height="1" fill="#EEF4FE"/><rect x="5" y="7" width="7" height="1" fill="#8CB0F8"/><rect x="5" y="8" width="7" height="1" fill="#EEF4FE"/><rect x="5" y="9" width="7" height="1" fill="#8CB0F8"/><rect x="5" y="10" width="7" height="1" fill="#EEF4FE"/><rect x="5" y="11" width="7" height="1" fill="#8CB0F8"/></svg>
<div class="a" style="left:746px;top:482px;width:15px;height:15px;border-radius:2px;border:1px solid #fff;background:linear-gradient(135deg,#E0EAFF,#B8CCF8);box-shadow:0 1px 0 #A9BEEA"></div>
<svg class="a" style="left:745px;top:482px" width="17" height="17"><path d="M4.5 5.5 L8.5 9.5 L12.5 5.5" fill="none" stroke="#4D6185" stroke-width="2"/></svg>
<!-- bottom group -->
<div class="a" style="left:9px;top:509px;width:471px;height:25px;border-top:1px solid #D0D0BF;border-left:1px solid #D0D0BF;border-right:1px solid #fff;border-bottom:1px solid #fff"></div>
<div class="a" style="left:10px;top:510px;width:470px;height:24px;border-top:1px solid #fff;border-left:1px solid #fff;border-right:1px solid #D0D0BF;border-bottom:1px solid #D0D0BF"></div>
<svg class="a" style="left:0;top:0" width="770" height="543" shape-rendering="crispEdges"><circle cx="82" cy="521" r="5.5" fill="#fff" stroke="#fff" stroke-width="1" shape-rendering="auto"/><path d="M78.11 524.89 A5.5 5.5 0 0 1 85.89 517.11" fill="none" stroke="#9D9A8C" stroke-width="1" shape-rendering="auto"/><path d="M78.82 524.18 A4.5 4.5 0 0 1 85.18 517.82" fill="none" stroke="#716F64" stroke-width="1" shape-rendering="auto"/><circle cx="192" cy="521" r="5.5" fill="#fff" stroke="#fff" stroke-width="1" shape-rendering="auto"/><path d="M188.11 524.89 A5.5 5.5 0 0 1 195.89 517.11" fill="none" stroke="#9D9A8C" stroke-width="1" shape-rendering="auto"/><path d="M188.82 524.18 A4.5 4.5 0 0 1 195.18 517.82" fill="none" stroke="#716F64" stroke-width="1" shape-rendering="auto"/><circle cx="192" cy="521" r="2.1" fill="#000" shape-rendering="auto"/><text x="93" y="525">Day of Week</text><rect x="202.5" y="513.5" width="59" height="15" fill="none" stroke="#000" stroke-dasharray="1 1"/><svg x="203" y="512" width="58" height="16"><text x="1" y="13">Time of Day</text></svg><rect x="272" y="515" width="13" height="13" fill="#fff"/><rect x="272" y="515" width="12" height="1" fill="#ACA899"/><rect x="272" y="515" width="1" height="12" fill="#ACA899"/><rect x="273" y="516" width="11" height="1" fill="#716F64"/><rect x="273" y="516" width="1" height="11" fill="#716F64"/><rect x="273" y="526" width="11" height="1" fill="#F1EFE2"/><rect x="283" y="516" width="1" height="11" fill="#F1EFE2"/><text x="291" y="525" textLength="58.5" lengthAdjust="spacingAndGlyphs">Closing Bars</text><text x="361" y="525" textLength="35" lengthAdjust="spacingAndGlyphs">Interval</text><rect x="399" y="513" width="30" height="15" fill="#fff"/><rect x="399" y="513" width="29" height="1" fill="#ACA899"/><rect x="399" y="513" width="1" height="14" fill="#ACA899"/><rect x="400" y="514" width="28" height="1" fill="#716F64"/><rect x="400" y="514" width="1" height="13" fill="#716F64"/><rect x="400" y="526" width="28" height="1" fill="#F1EFE2"/><rect x="427" y="514" width="1" height="13" fill="#F1EFE2"/><text x="407" y="524">30</text><text x="434" y="525" textLength="37" lengthAdjust="spacingAndGlyphs">minutes</text><rect x="484" y="509" width="65" height="24" fill="#716F64"/><rect x="484" y="509" width="64" height="23" fill="#fff"/><rect x="485" y="510" width="63" height="22" fill="#ACA899"/><rect x="485" y="510" width="62" height="21" fill="#ECE9D8"/><text x="517.0" y="525" text-anchor="middle" style="fill:#000" textLength="53.5" lengthAdjust="spacingAndGlyphs">Print <tspan style="text-decoration:underline">G</tspan>raph</text><rect x="550" y="509" width="65" height="24" fill="#716F64"/><rect x="550" y="509" width="64" height="23" fill="#fff"/><rect x="551" y="510" width="63" height="22" fill="#ACA899"/><rect x="551" y="510" width="62" height="21" fill="#ECE9D8"/><text x="583.0" y="525" text-anchor="middle" style="fill:#000">Print <tspan style="text-decoration:underline">T</tspan>able</text><rect x="616" y="509" width="65" height="24" fill="#716F64"/><rect x="616" y="509" width="64" height="23" fill="#fff"/><rect x="617" y="510" width="63" height="22" fill="#ACA899"/><rect x="617" y="510" width="62" height="21" fill="#ECE9D8"/><text x="648.5" y="525" text-anchor="middle" style="fill:#000" textLength="59" lengthAdjust="spacingAndGlyphs"><tspan style="text-decoration:underline">S</tspan>ave as File</text><rect x="682" y="509" width="40" height="24" fill="#716F64"/><rect x="682" y="509" width="39" height="23" fill="#fff"/><rect x="683" y="510" width="38" height="22" fill="#ACA899"/><rect x="683" y="510" width="37" height="21" fill="#ECE9D8"/><text x="704.0" y="525" text-anchor="middle" style="fill:#000080">Help</text><rect x="723" y="509" width="41" height="24" fill="#716F64"/><rect x="723" y="509" width="40" height="23" fill="#fff"/><rect x="724" y="510" width="39" height="22" fill="#ACA899"/><rect x="724" y="510" width="38" height="21" fill="#ECE9D8"/><text x="744.5" y="525" text-anchor="middle" style="fill:#800000"><tspan style="text-decoration:underline">C</tspan>lose</text></svg>
</body></html>
